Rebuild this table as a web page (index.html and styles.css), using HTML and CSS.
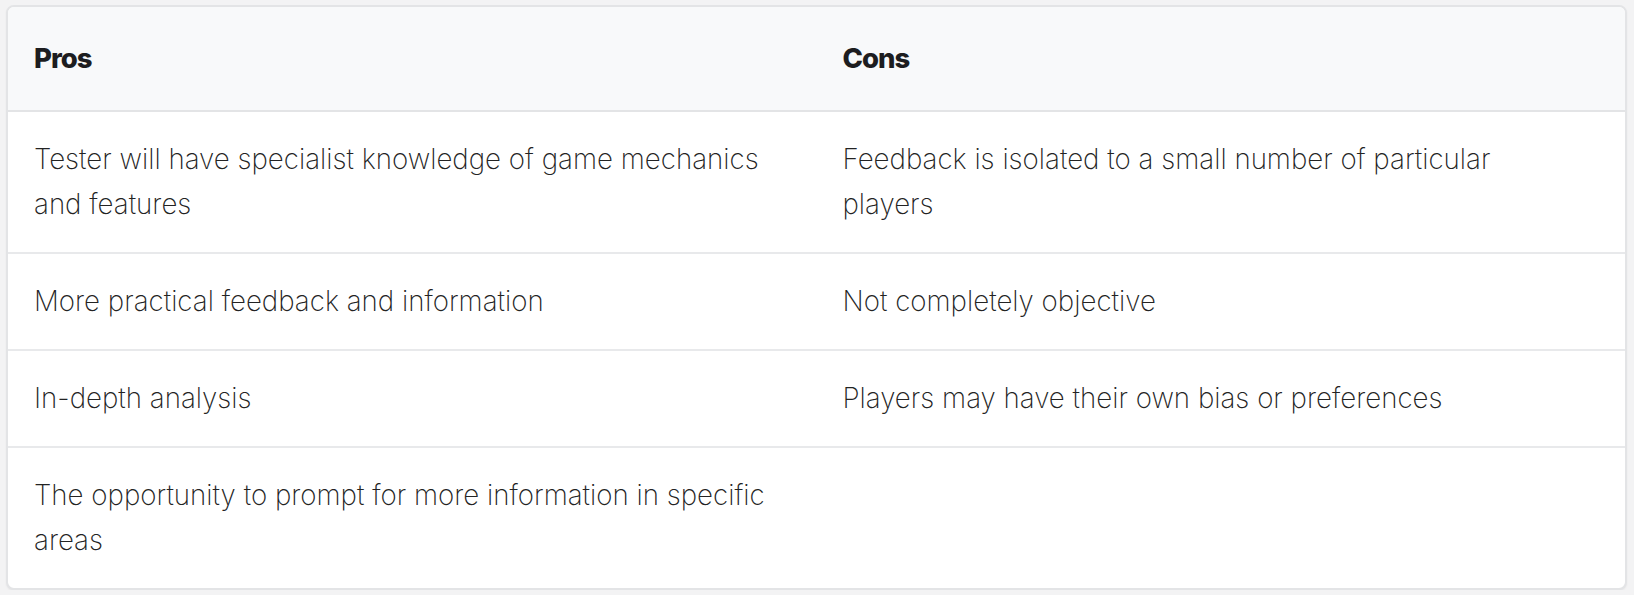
FILE: index.html
```html
<!DOCTYPE html>
<html lang="en">
<head>
<meta charset="utf-8">
<title>Pros and Cons</title>
<link rel="stylesheet" href="styles.css">
</head>
<body>
<div class="card">
  <table class="pc-table">
    <thead>
      <tr><th>Pros</th><th>Cons</th></tr>
    </thead>
    <tbody>
      <tr><td>Tester will have specialist knowledge of game mechanics and features</td><td>Feedback is isolated to a small number of particular players</td></tr>
      <tr><td>More practical feedback and information</td><td>Not completely objective</td></tr>
      <tr><td>In-depth analysis</td><td>Players may have their own bias or preferences</td></tr>
      <tr><td>The opportunity to prompt for more information in specific areas</td><td></td></tr>
    </tbody>
  </table>
</div>
</body>
</html>
```
FILE: styles.css
```css
html, body {
  margin: 0;
  background: #f3f3f4;
}
body {
  padding: 5px 7px 0 6px;
  font-family: "Inter", "Roboto", sans-serif;
}
.card {
  background: #ffffff;
  border: 2px solid #e3e4e6;
  border-radius: 8px;
  overflow: hidden;
  box-shadow: 0 1px 2px rgba(0, 0, 0, 0.06);
}
.pc-table {
  width: 100%;
  border-collapse: collapse;
  table-layout: fixed;
}
.pc-table th {
  background: #f8f9fa;
  text-align: left;
  font-weight: 800;
  font-size: 27.5px;
  line-height: 45px;
  color: #1d1d1f;
  padding: 29px 26px;
  border-bottom: 2px solid #e3e4e6;
  letter-spacing: -1px;
}
.pc-table td {
  font-weight: 200;
  font-size: 27.7px;
  line-height: 45px;
  color: #232323;
  padding: 25px 40px 25px 26px;
  vertical-align: middle;
  border-bottom: 2px solid #e8e9eb;
}
.pc-table tbody tr:last-child td {
  border-bottom: none;
}
```
